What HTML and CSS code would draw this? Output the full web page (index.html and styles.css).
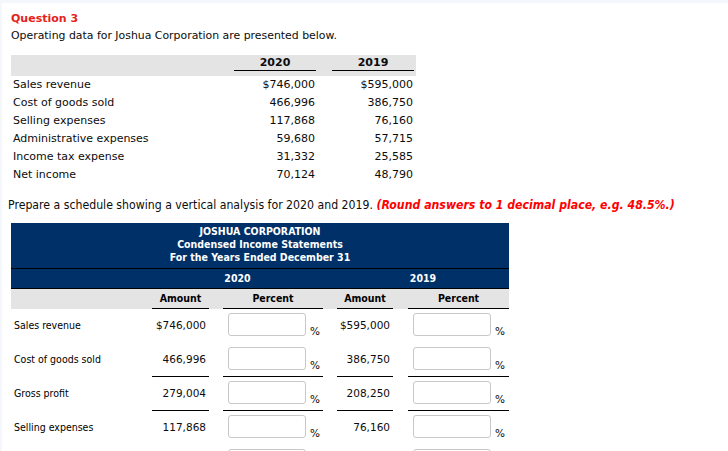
FILE: index.html
```html
<!DOCTYPE html>
<html>
<head>
<meta charset="utf-8">
<link rel="stylesheet" href="styles.css">
</head>
<body>
<div class="page">
  <div class="q-title">Question 3</div>
  <div class="q-text">Operating data for Joshua Corporation are presented below.</div>

  <table class="data">
    <colgroup>
      <col class="c-label"><col class="c-num"><col class="c-gap"><col class="c-num"><col class="c-end">
    </colgroup>
    <thead>
      <tr>
        <th></th>
        <th><div class="yr">2020</div></th>
        <th></th>
        <th><div class="yr">2019</div></th>
        <th></th>
      </tr>
    </thead>
    <tbody>
      <tr><td>Sales revenue</td><td class="n">$746,000</td><td></td><td class="n">$595,000</td><td></td></tr>
      <tr><td>Cost of goods sold</td><td class="n">466,996</td><td></td><td class="n">386,750</td><td></td></tr>
      <tr><td>Selling expenses</td><td class="n">117,868</td><td></td><td class="n">76,160</td><td></td></tr>
      <tr><td>Administrative expenses</td><td class="n">59,680</td><td></td><td class="n">57,715</td><td></td></tr>
      <tr><td>Income tax expense</td><td class="n">31,332</td><td></td><td class="n">25,585</td><td></td></tr>
      <tr><td>Net income</td><td class="n">70,124</td><td></td><td class="n">48,790</td><td></td></tr>
    </tbody>
  </table>

  <p class="instr">Prepare a schedule showing a vertical analysis for 2020 and 2019. <em class="hint">(Round answers to 1 decimal place, e.g. 48.5%.)</em></p>

  <table class="sched">
    <colgroup>
      <col class="s-label"><col class="s-amt"><col class="s-gap"><col class="s-pct"><col class="s-gap"><col class="s-amt2"><col class="s-gap2"><col class="s-pct2">
    </colgroup>
    <thead>
      <tr class="title">
        <th colspan="8">JOSHUA CORPORATION<br>Condensed Income Statements<br>For the Years Ended December 31</th>
      </tr>
      <tr class="years">
        <th></th>
        <th colspan="3">2020</th>
        <th></th>
        <th colspan="3">2019</th>
      </tr>
      <tr class="cols">
        <th></th>
        <th class="ul">Amount</th>
        <th></th>
        <th class="ul">Percent</th>
        <th></th>
        <th class="ul">Amount</th>
        <th></th>
        <th class="ul">Percent</th>
      </tr>
    </thead>
    <tbody>
      <tr>
        <td class="lbl">Sales revenue</td>
        <td class="amt">$746,000</td><td></td>
        <td class="pct"><div class="pw"><input type="text"><span class="ps">%</span></div></td><td></td>
        <td class="amt">$595,000</td><td></td>
        <td class="pct"><div class="pw"><input type="text"><span class="ps">%</span></div></td>
      </tr>
      <tr class="sum">
        <td class="lbl">Cost of goods sold</td>
        <td class="amt ul">466,996</td><td></td>
        <td class="pct ul"><div class="pw"><input type="text"><span class="ps">%</span></div></td><td></td>
        <td class="amt ul">386,750</td><td></td>
        <td class="pct ul"><div class="pw"><input type="text"><span class="ps">%</span></div></td>
      </tr>
      <tr class="sum">
        <td class="lbl">Gross profit</td>
        <td class="amt ul">279,004</td><td></td>
        <td class="pct ul"><div class="pw"><input type="text"><span class="ps">%</span></div></td><td></td>
        <td class="amt ul">208,250</td><td></td>
        <td class="pct ul"><div class="pw"><input type="text"><span class="ps">%</span></div></td>
      </tr>
      <tr>
        <td class="lbl">Selling expenses</td>
        <td class="amt">117,868</td><td></td>
        <td class="pct"><div class="pw"><input type="text"><span class="ps">%</span></div></td><td></td>
        <td class="amt">76,160</td><td></td>
        <td class="pct"><div class="pw"><input type="text"><span class="ps">%</span></div></td>
      </tr>
      <tr>
        <td class="lbl"></td>
        <td class="amt"></td><td></td>
        <td class="pct"><div class="pw"><input type="text"></div></td><td></td>
        <td class="amt"></td><td></td>
        <td class="pct"><div class="pw"><input type="text"></div></td>
      </tr>
    </tbody>
  </table>
</div>
</body>
</html>
```

FILE: styles.css
```css
html, body {
  margin: 0;
  padding: 0;
}
body {
  background: #f4f7fb;
  padding: 3px 0 0 2px;
  font-family: "DejaVu Sans", Verdana, sans-serif;
  font-size: 11px;
  color: #0c0c0c;
  overflow: hidden;
  height: 448px;
}
.page {
  background: #fff;
  padding: 8px 0 0 9px;
  height: 440px;
  overflow: hidden;
}
.q-title {
  color: #e5231b;
  font-weight: bold;
  font-size: 11px;
  line-height: 14px;
  padding-top: 1px;
}
.q-text {
  margin-top: 3px;
  line-height: 14px;
  font-size: 10.9px;
}
table {
  border-collapse: separate;
  border-spacing: 0;
  table-layout: fixed;
}
.data {
  margin-top: 12px;
  width: 405px;
}
.c-label { width: 223px; }
.c-num { width: 82px; }
.c-gap { width: 16px; }
.c-end { width: 2px; }
.data thead th {
  background: #e4e4e4;
  padding: 1px 0 5px;
  font-weight: bold;
  text-align: center;
  line-height: 14px;
}
.data .yr {
  border-bottom: 1px solid #000;
}
.data td {
  height: 18px;
  padding: 0 0 0 2px;
  line-height: 18px;
  white-space: nowrap;
}
.data td.n {
  text-align: right;
  padding: 0 1px 0 0;
}
.instr {
  margin: 14px 0 0 -3px;
  font-family: "DejaVu Sans Condensed", Tahoma, sans-serif;
  font-size: 12.2px;
  line-height: 15px;
  color: #0c0c0c;
}
.hint {
  color: #f00;
  font-weight: bold;
  font-style: italic;
}
.sched {
  margin-top: 10px;
  width: 498px;
}
.s-label { width: 141px; }
.s-amt { width: 57px; }
.s-gap { width: 14px; }
.s-pct { width: 100px; }
.s-amt2 { width: 56px; }
.s-gap2 { width: 15px; }
.s-pct2 { width: 101px; }
.sched th {
  font-family: "DejaVu Sans Condensed", Tahoma, sans-serif;
  font-weight: bold;
  font-size: 10.5px;
  text-align: center;
  padding: 0;
}
.sched .title th {
  background: #003068;
  color: #fff;
  line-height: 13px;
  padding: 2px 0 4px;
  border-bottom: 1px solid #000;
}
.sched .years th {
  background: #003068;
  color: #fff;
  height: 19px;
  line-height: 19px;
  border-bottom: 1px solid #000;
}
.sched .cols th {
  background: #e4e4e4;
  color: #000;
  height: 19px;
  line-height: 19px;
}
.sched .cols th.ul {
  border-bottom: 1px solid #000;
}
.sched td {
  height: 34px;
  padding: 0;
  vertical-align: top;
  white-space: nowrap;
  box-sizing: border-box;
}
.sched tr.sum td.ul {
  border-bottom: 1px solid #000;
}
.lbl, .amt {
  padding-top: 9px !important;
  line-height: 14px;
  font-size: 10.5px;
}
.lbl {
  font-family: "DejaVu Sans Condensed", Tahoma, sans-serif;
  padding-left: 3px !important;
  color: #000;
}
.amt {
  text-align: right;
  padding-right: 3px !important;
  color: #0c0c0c;
}
.pct {
  padding-top: 4px !important;
}
.pw {
  display: flex;
  align-items: flex-end;
  padding-left: 5px;
}
.pw input {
  box-sizing: border-box;
  width: 78px;
  height: 23px;
  margin: 0;
  border: 1px solid #c8c8c8;
  border-radius: 3px;
  background: #fff;
  padding: 0 4px;
}
.ps {
  margin-left: 4px;
  font-size: 10.5px;
  line-height: 10px;
  color: #0c0c0c;
}
```
